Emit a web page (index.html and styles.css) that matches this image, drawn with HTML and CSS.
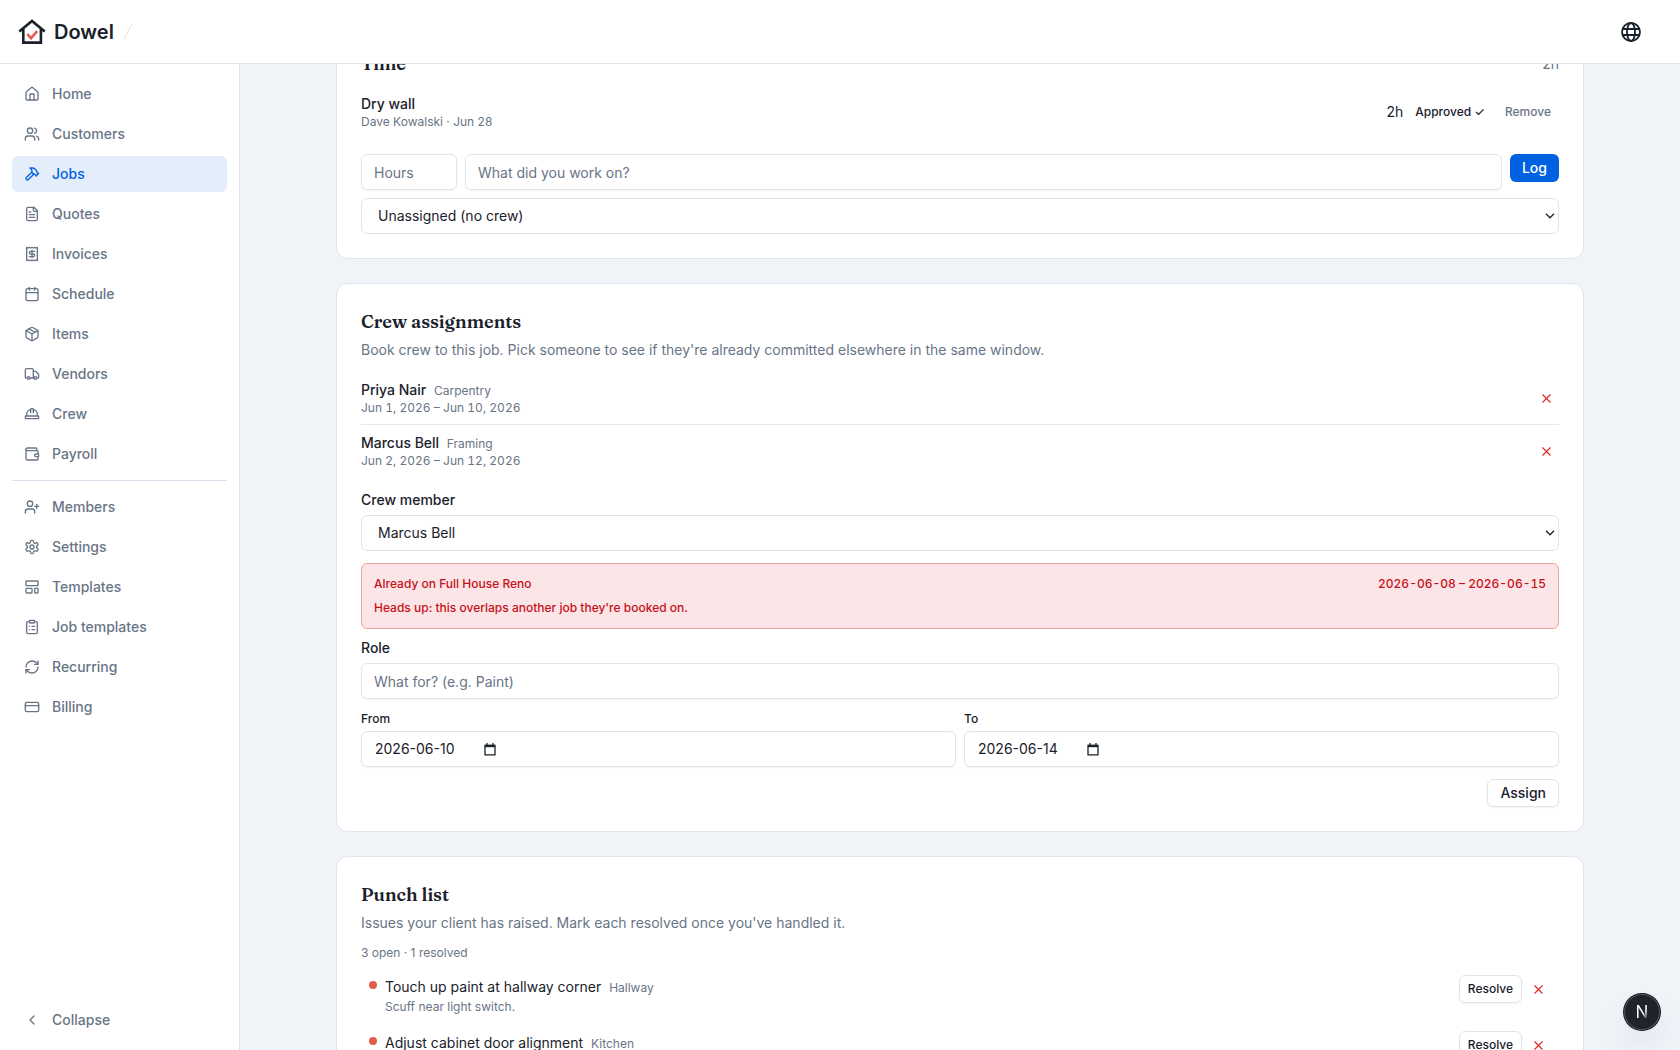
FILE: index.html
```
<!DOCTYPE html>
<html lang="en">
    <head>
        <meta charset="utf-8">
        <meta name="viewport" content="width=device-width, initial-scale=1">
        <title>Dowel</title>
        <link rel="stylesheet" href="styles.css">
    </head>
    <body>
        <header class="topbar">
            <a class="brand" href="#">
                <svg class="brand-mark" viewBox="0 0 28 28" fill="none" stroke="currentColor" stroke-width="2.6">
                    <path d="M1.3 13.6 14 3l12.7 10.6"/>
                    <path d="M5.3 11v13.6h17.6V11"/>
                    <path class="brand-check" d="m9.3 16 3.7 4.2 6.2-7"/>
                </svg>
                <span>Dowel</span>
            </a>
            <svg class="slash" viewBox="0 0 16 16" stroke="currentColor"><path d="M12 0 4 15"/></svg>
            <button class="lang" type="button" aria-label="Language">
                <svg viewBox="0 0 20 20" fill="none" stroke="currentColor" stroke-width="1.8">
                    <circle cx="10" cy="10" r="9"/>
                    <ellipse cx="10" cy="10" rx="4" ry="9"/>
                    <path d="M1.5 7h17M1.5 13h17"/>
                </svg>
            </button>
        </header>

        <div class="layout">
            <aside class="sidebar">
                <nav class="nav">
                    <a class="nav-item" href="#">
                        <svg class="icon" viewBox="0 0 24 24"><path d="M15 21v-8a1 1 0 0 0-1-1h-4a1 1 0 0 0-1 1v8"/><path d="M3 10a2 2 0 0 1 .709-1.528l7-5.999a2 2 0 0 1 2.582 0l7 5.999A2 2 0 0 1 21 10v9a2 2 0 0 1-2 2H5a2 2 0 0 1-2-2z"/></svg>
                        Home
                    </a>
                    <a class="nav-item" href="#">
                        <svg class="icon" viewBox="0 0 24 24"><path d="M16 21v-2a4 4 0 0 0-4-4H6a4 4 0 0 0-4 4v2"/><circle cx="9" cy="7" r="4"/><path d="M22 21v-2a4 4 0 0 0-3-3.87"/><path d="M16 3.13a4 4 0 0 1 0 7.75"/></svg>
                        Customers
                    </a>
                    <a class="nav-item active" href="#">
                        <svg class="icon" viewBox="0 0 24 24"><path d="m15 12-8.373 8.373a1 1 0 1 1-3-3L12 9"/><path d="m18 15 4-4"/><path d="m21.5 11.5-1.914-1.914A2 2 0 0 1 19 8.172V7l-2.26-2.26a6 6 0 0 0-4.202-1.756L9 2.96l.92.82A6.18 6.18 0 0 1 12 8.4V10l2 2h1.172a2 2 0 0 1 1.414.586L18.5 14.5"/></svg>
                        Jobs
                    </a>
                    <a class="nav-item" href="#">
                        <svg class="icon" viewBox="0 0 24 24"><path d="M15 2H6a2 2 0 0 0-2 2v16a2 2 0 0 0 2 2h12a2 2 0 0 0 2-2V7Z"/><path d="M14 2v4a2 2 0 0 0 2 2h4"/><path d="M10 9H8"/><path d="M16 13H8"/><path d="M16 17H8"/></svg>
                        Quotes
                    </a>
                    <a class="nav-item" href="#">
                        <svg class="icon" viewBox="0 0 24 24"><path d="M4 2v20l2-1 2 1 2-1 2 1 2-1 2 1 2-1 2 1V2l-2 1-2-1-2 1-2-1-2 1-2-1-2 1Z"/><path d="M16 8h-6a2 2 0 1 0 0 4h4a2 2 0 1 1 0 4H8"/><path d="M12 17.5v-11"/></svg>
                        Invoices
                    </a>
                    <a class="nav-item" href="#">
                        <svg class="icon" viewBox="0 0 24 24"><path d="M8 2v4"/><path d="M16 2v4"/><rect width="18" height="18" x="3" y="4" rx="2"/><path d="M3 10h18"/></svg>
                        Schedule
                    </a>
                    <a class="nav-item" href="#">
                        <svg class="icon" viewBox="0 0 24 24"><path d="M11 21.73a2 2 0 0 0 2 0l7-4A2 2 0 0 0 21 16V8a2 2 0 0 0-1-1.73l-7-4a2 2 0 0 0-2 0l-7 4A2 2 0 0 0 3 8v8a2 2 0 0 0 1 1.73z"/><path d="M12 22V12"/><path d="M3.29 7 12 12l8.71-5"/><path d="m7.5 4.27 9 5.15"/></svg>
                        Items
                    </a>
                    <a class="nav-item" href="#">
                        <svg class="icon" viewBox="0 0 24 24"><path d="M14 18V6a2 2 0 0 0-2-2H4a2 2 0 0 0-2 2v11a1 1 0 0 0 1 1h2"/><path d="M15 18H9"/><path d="M19 18h2a1 1 0 0 0 1-1v-3.65a1 1 0 0 0-.22-.624l-3.48-4.35A1 1 0 0 0 17.52 8H14"/><circle cx="17" cy="18" r="2"/><circle cx="7" cy="18" r="2"/></svg>
                        Vendors
                    </a>
                    <a class="nav-item" href="#">
                        <svg class="icon" viewBox="0 0 24 24"><path d="M10 10V5a1 1 0 0 1 1-1h2a1 1 0 0 1 1 1v5"/><path d="M14 6a6 6 0 0 1 6 6v3"/><path d="M4 15v-3a6 6 0 0 1 6-6"/><rect x="2" y="15" width="20" height="4" rx="1"/></svg>
                        Crew
                    </a>
                    <a class="nav-item" href="#">
                        <svg class="icon" viewBox="0 0 24 24"><path d="M19 7V4a1 1 0 0 0-1-1H5a2 2 0 0 0 0 4h15a1 1 0 0 1 1 1v4h-3a2 2 0 0 0 0 4h3a1 1 0 0 0 1-1v-2a1 1 0 0 0-1-1"/><path d="M3 5v14a2 2 0 0 0 2 2h15a1 1 0 0 0 1-1v-4"/></svg>
                        Payroll
                    </a>
                </nav>
                <hr class="nav-line">
                <nav class="nav">
                    <a class="nav-item" href="#">
                        <svg class="icon" viewBox="0 0 24 24"><path d="M16 21v-2a4 4 0 0 0-4-4H6a4 4 0 0 0-4 4v2"/><circle cx="9" cy="7" r="4"/><path d="M19 8v6"/><path d="M22 11h-6"/></svg>
                        Members
                    </a>
                    <a class="nav-item" href="#">
                        <svg class="icon" viewBox="0 0 24 24"><path d="M12.22 2h-.44a2 2 0 0 0-2 2v.18a2 2 0 0 1-1 1.73l-.43.25a2 2 0 0 1-2 0l-.15-.08a2 2 0 0 0-2.73.73l-.22.38a2 2 0 0 0 .73 2.73l.15.1a2 2 0 0 1 1 1.72v.51a2 2 0 0 1-1 1.74l-.15.09a2 2 0 0 0-.73 2.73l.22.38a2 2 0 0 0 2.73.73l.15-.08a2 2 0 0 1 2 0l.43.25a2 2 0 0 1 1 1.73V20a2 2 0 0 0 2 2h.44a2 2 0 0 0 2-2v-.18a2 2 0 0 1 1-1.73l.43-.25a2 2 0 0 1 2 0l.15.08a2 2 0 0 0 2.73-.73l.22-.39a2 2 0 0 0-.73-2.73l-.15-.08a2 2 0 0 1-1-1.74v-.5a2 2 0 0 1 1-1.74l.15-.09a2 2 0 0 0 .73-2.73l-.22-.38a2 2 0 0 0-2.73-.73l-.15.08a2 2 0 0 1-2 0l-.43-.25a2 2 0 0 1-1-1.73V4a2 2 0 0 0-2-2z"/><circle cx="12" cy="12" r="3"/></svg>
                        Settings
                    </a>
                    <a class="nav-item" href="#">
                        <svg class="icon" viewBox="0 0 24 24"><rect width="18" height="7" x="3" y="3" rx="1"/><rect width="9" height="7" x="3" y="14" rx="1"/><rect width="5" height="7" x="16" y="14" rx="1"/></svg>
                        Templates
                    </a>
                    <a class="nav-item" href="#">
                        <svg class="icon" viewBox="0 0 24 24"><rect width="8" height="4" x="8" y="2" rx="1"/><path d="M16 4h2a2 2 0 0 1 2 2v14a2 2 0 0 1-2 2H6a2 2 0 0 1-2-2V6a2 2 0 0 1 2-2h2"/><path d="M12 11h4"/><path d="M12 16h4"/><path d="M8 11h.01"/><path d="M8 16h.01"/></svg>
                        Job templates
                    </a>
                    <a class="nav-item" href="#">
                        <svg class="icon" viewBox="0 0 24 24"><path d="M3 12a9 9 0 0 1 9-9 9.75 9.75 0 0 1 6.74 2.74L21 8"/><path d="M21 3v5h-5"/><path d="M21 12a9 9 0 0 1-9 9 9.75 9.75 0 0 1-6.74-2.74L3 16"/><path d="M8 16H3v5"/></svg>
                        Recurring
                    </a>
                    <a class="nav-item" href="#">
                        <svg class="icon" viewBox="0 0 24 24"><rect width="20" height="14" x="2" y="5" rx="2"/><path d="M2 10h20"/></svg>
                        Billing
                    </a>
                </nav>
                <button class="nav-item collapse" type="button">
                    <svg class="icon" viewBox="0 0 24 24"><path d="m15 18-6-6 6-6"/></svg>
                    Collapse
                </button>
            </aside>

            <main class="main">
                <div class="stack">
                    <section class="card">
                        <div class="card-head">
                            <h2>Time</h2>
                            <span class="muted">2h</span>
                        </div>
                        <ul class="rows time-rows">
                            <li class="row">
                                <div class="row-text">
                                    <p class="name">Dry wall</p>
                                    <p class="small">Dave Kowalski · Jun 28</p>
                                </div>
                                <div class="row-side">
                                    <span>2h</span>
                                    <button class="link-btn" type="button">Approved ✓</button>
                                    <button class="btn btn-ghost" type="button">Remove</button>
                                </div>
                            </li>
                        </ul>
                        <form class="time-form">
                            <div class="time-line">
                                <input class="field hours" type="text" placeholder="Hours" aria-label="Hours">
                                <input class="field" type="text" placeholder="What did you work on?" aria-label="What did you work on?">
                                <button class="btn btn-primary" type="button">Log</button>
                            </div>
                            <select class="field" aria-label="Crew">
                                <option>Unassigned (no crew)</option>
                            </select>
                        </form>
                    </section>

                    <section class="card">
                        <h2>Crew assignments</h2>
                        <p class="desc">Book crew to this job. Pick someone to see if they're already committed elsewhere in the same window.</p>
                        <ul class="rows">
                            <li class="row">
                                <div class="row-text">
                                    <p class="name">Priya Nair <span class="tag">Carpentry</span></p>
                                    <p class="small range">Jun 1, 2026 – Jun 10, 2026</p>
                                </div>
                                <button class="btn btn-x" type="button" aria-label="Remove Priya Nair"><svg viewBox="0 0 9 9"><path d="m.5.5 8 8m0-8-8 8"/></svg></button>
                            </li>
                            <li class="row">
                                <div class="row-text">
                                    <p class="name">Marcus Bell <span class="tag">Framing</span></p>
                                    <p class="small range">Jun 2, 2026 – Jun 12, 2026</p>
                                </div>
                                <button class="btn btn-x" type="button" aria-label="Remove Marcus Bell"><svg viewBox="0 0 9 9"><path d="m.5.5 8 8m0-8-8 8"/></svg></button>
                            </li>
                        </ul>
                        <form class="crew-form">
                            <div class="group">
                                <label for="member">Crew member</label>
                                <select class="field" id="member">
                                    <option>Marcus Bell</option>
                                </select>
                            </div>
                            <div class="alert">
                                <p class="alert-line"><span>Already on Full House Reno</span><span class="range">2026-06-08 – 2026-06-15</span></p>
                                <p>Heads up: this overlaps another job they're booked on.</p>
                            </div>
                            <div class="group">
                                <label for="role">Role</label>
                                <input class="field" id="role" type="text" placeholder="What for? (e.g. Paint)">
                            </div>
                            <div class="dates">
                                <div class="date">
                                    <label for="from">From</label>
                                    <div class="field date-field">
                                        <input id="from" type="text" value="2026-06-10">
                                        <button type="button" aria-label="Pick a start date">
                                            <svg class="calendar" viewBox="0 0 12 13"><path d="M1 2.5h10v9.3H1z"/><path d="M1 3h10" stroke-width="2.4"/><path d="M3 0v2M9 0v2"/></svg>
                                        </button>
                                    </div>
                                </div>
                                <div class="date">
                                    <label for="to">To</label>
                                    <div class="field date-field">
                                        <input id="to" type="text" value="2026-06-14">
                                        <button type="button" aria-label="Pick an end date">
                                            <svg class="calendar" viewBox="0 0 12 13"><path d="M1 2.5h10v9.3H1z"/><path d="M1 3h10" stroke-width="2.4"/><path d="M3 0v2M9 0v2"/></svg>
                                        </button>
                                    </div>
                                </div>
                            </div>
                            <button class="btn btn-outline assign" type="button">Assign</button>
                        </form>
                    </section>

                    <section class="card">
                        <h2>Punch list</h2>
                        <p class="desc">Issues your client has raised. Mark each resolved once you've handled it.</p>
                        <p class="small count">3 open · 1 resolved</p>
                        <ul class="punch">
                            <li class="punch-item">
                                <span class="dot"></span>
                                <div class="punch-text">
                                    <p>Touch up paint at hallway corner <span class="tag">Hallway</span></p>
                                    <p class="small note">Scuff near light switch.</p>
                                </div>
                                <div class="punch-side">
                                    <button class="btn btn-outline btn-small" type="button">Resolve</button>
                                    <button class="btn btn-x" type="button" aria-label="Delete"><svg viewBox="0 0 9 9"><path d="m.5.5 8 8m0-8-8 8"/></svg></button>
                                </div>
                            </li>
                            <li class="punch-item">
                                <span class="dot"></span>
                                <div class="punch-text">
                                    <p>Adjust cabinet door alignment <span class="tag">Kitchen</span></p>
                                </div>
                                <div class="punch-side">
                                    <button class="btn btn-outline btn-small" type="button">Resolve</button>
                                    <button class="btn btn-x" type="button" aria-label="Delete"><svg viewBox="0 0 9 9"><path d="m.5.5 8 8m0-8-8 8"/></svg></button>
                                </div>
                            </li>
                        </ul>
                    </section>
                </div>
            </main>
        </div>

        <button class="dev-badge" type="button" aria-label="Dev tools"><span>N</span></button>
    </body>
</html>
```

FILE: styles.css
```
:root {
    --ink: #1a212b;
    --muted: #697586;
    --line: #e0e5ed;
    --blue: #0062e0;
    --red: #c8101a;
}

* {
    box-sizing: border-box;
}

body {
    margin: 0;
    height: 100vh;
    display: flex;
    flex-direction: column;
    overflow: hidden;
    font: 14px/20px Inter, "Liberation Sans", sans-serif;
    color: var(--ink);
    background: #f0f4f9;
}

h2,
p,
ul {
    margin: 0;
    padding: 0;
    list-style: none;
}

button,
input,
select {
    font: inherit;
    color: inherit;
}

button {
    padding: 0;
    border: 0;
    background: none;
    cursor: pointer;
}

/* header */
.topbar {
    flex: none;
    display: flex;
    align-items: center;
    height: 64px;
    padding: 0 38px 0 18px;
    background: #fff;
    border-bottom: 1px solid var(--line);
}

.brand {
    display: flex;
    align-items: center;
    gap: 8px;
    font-size: 20px;
    font-weight: 600;
    line-height: 28px;
    color: var(--ink);
    text-decoration: none;
}

.brand-mark {
    width: 28px;
    height: 28px;
}

.brand-check {
    stroke: #e35d4f;
}

.slash {
    width: 16px;
    height: 16px;
    margin-left: 6px;
    color: #dbe1ea;
}

.lang {
    display: flex;
    margin-left: auto;
}

.lang svg {
    width: 22px;
    height: 20px;
}

/* sidebar */
.layout {
    flex: 1;
    min-height: 0;
    display: flex;
}

.sidebar {
    flex: none;
    width: 240px;
    display: flex;
    flex-direction: column;
    padding: 12px;
    background: #fff;
    border-right: 1px solid var(--line);
}

.nav {
    display: flex;
    flex-direction: column;
    gap: 4px;
}

.nav-item {
    display: flex;
    align-items: center;
    gap: 12px;
    height: 36px;
    padding: 0 12px;
    border-radius: 6px;
    font-weight: 500;
    color: var(--muted);
    text-decoration: none;
}

.nav-item.active {
    color: var(--blue);
    background: #e4eefb;
}

.icon {
    width: 16px;
    height: 16px;
    fill: none;
    stroke: currentColor;
    stroke-width: 2;
    stroke-linecap: round;
    stroke-linejoin: round;
}

.nav-line {
    width: 100%;
    margin: 8px 0;
    border: 0;
    border-top: 1px solid #d8e1ec;
}

.collapse {
    margin-top: auto;
}

/* content, scrolled down to the time card */
.main {
    flex: 1;
    min-width: 0;
    overflow: hidden;
    padding: 0 24px;
}

.stack {
    max-width: 1248px;
    margin: -39px auto 0;
    display: flex;
    flex-direction: column;
    gap: 24px;
}

.card {
    padding: 24px;
    background: #fff;
    border: 1px solid var(--line);
    border-radius: 12px;
}

.card h2 {
    font: 600 18px/28px Fraunces, "Liberation Serif", serif;
    font-variation-settings: "opsz" 72;
}

.card-head {
    display: flex;
    align-items: center;
    justify-content: space-between;
}

.muted,
.desc {
    color: var(--muted);
}

.desc {
    margin-top: 4px;
}

.small {
    font-size: 12px;
    line-height: 16px;
    color: var(--muted);
}

.range {
    font-variant-numeric: tabular-nums;
}

.rows {
    margin-top: 12px;
}

.time-rows {
    margin-top: 8px;
}

.row {
    display: flex;
    align-items: center;
    justify-content: space-between;
    padding: 8px 0;
}

.row + .row {
    border-top: 1px solid #e6eaf0;
}

.row-side {
    display: flex;
    align-items: center;
    gap: 12px;
}

.name {
    font-weight: 500;
}

.tag {
    margin-left: 4px;
    font-size: 12px;
    font-weight: 400;
    line-height: 16px;
    color: var(--muted);
}

/* buttons */
.btn {
    flex: none;
    height: 28px;
    padding: 0 12px;
    border-radius: 6px;
    font-weight: 500;
}

.btn-primary {
    color: #fff;
    background: var(--blue);
}

.btn-outline {
    border: 1px solid var(--line);
    background: #fff;
    box-shadow: 0 1px 2px rgba(26, 33, 43, .05);
}

.btn-small,
.btn-ghost,
.btn-x {
    padding: 0 8px;
    font-size: 12px;
}

.btn-ghost {
    color: var(--muted);
}

.btn-x svg {
    display: block;
    width: 9px;
    height: 9px;
    stroke: #dc2626;
    stroke-width: 1.1;
}

.link-btn {
    font-size: 12px;
    font-weight: 500;
}

/* form fields */
.field {
    display: block;
    width: 100%;
    height: 36px;
    padding: 0 12px;
    border: 1px solid var(--line);
    border-radius: 6px;
    background: #fff;
    box-shadow: 0 1px 2px rgba(26, 33, 43, .05);
}

select.field {
    padding-left: 16px;
    appearance: none;
    background: #fff url("data:image/svg+xml,%3Csvg xmlns='http://www.w3.org/2000/svg' width='10' height='6' fill='none' stroke='%231a212b' stroke-width='1.3'%3E%3Cpath d='m1 .8 4 4 4-4'/%3E%3C/svg%3E") no-repeat right 3px center;
    box-shadow: none;
}

.field::placeholder {
    color: var(--muted);
    opacity: 1;
}

.time-form {
    display: flex;
    flex-direction: column;
    gap: 8px;
    margin-top: 16px;
}

.time-line {
    display: flex;
    gap: 8px;
}

.field.hours {
    flex: none;
    width: 96px;
}

.crew-form {
    display: flex;
    flex-direction: column;
    gap: 12px;
    margin-top: 16px;
}

.group {
    display: flex;
    flex-direction: column;
    gap: 8px;
    font-weight: 500;
    line-height: 14px;
}

.group .field {
    font-weight: 400;
}

.alert {
    display: flex;
    flex-direction: column;
    gap: 8px;
    padding: 12px;
    border: 1px solid #f0a0a4;
    border-radius: 6px;
    font-size: 12px;
    font-weight: 500;
    line-height: 16px;
    color: var(--red);
    background: #fbe5e7;
}

.alert-line {
    display: flex;
    justify-content: space-between;
}

.dates {
    display: grid;
    grid-template-columns: 1fr 1fr;
    gap: 8px;
}

.date {
    display: flex;
    flex-direction: column;
    gap: 4px;
}

.date label {
    font-size: 12px;
    font-weight: 500;
    line-height: 16px;
}

.date-field {
    display: flex;
    align-items: center;
}

.date-field input {
    width: 110px;
    padding: 0 1px;
    border: 0;
    background: none;
}

.calendar {
    display: block;
    width: 12px;
    height: 13px;
    fill: none;
    stroke: currentColor;
    stroke-width: 1.3;
}

.assign {
    align-self: flex-end;
}

/* punch list */
.count {
    margin-top: 12px;
}

.punch {
    display: flex;
    flex-direction: column;
    gap: 4px;
    margin-top: 8px;
}

.punch-item {
    display: flex;
    align-items: flex-start;
    gap: 8px;
    padding: 6px 8px;
}

.dot {
    flex: none;
    width: 8px;
    height: 8px;
    margin-top: 6px;
    border-radius: 50%;
    background: #e35d4f;
}

.punch-text {
    flex: 1;
    padding-top: 2px;
}

.note {
    margin-top: 2px;
}

.punch-side {
    display: flex;
    gap: 4px;
}

.dev-badge {
    position: fixed;
    right: 20px;
    bottom: 20px;
    width: 36px;
    height: 36px;
    border-radius: 50%;
    background: #20232b;
    box-shadow: inset 0 0 0 1px #50545b, 0 0 0 1px #15181d, 0 16px 32px -8px rgba(40, 50, 90, .24);
    font-size: 17px;
    font-weight: 400;
}

.dev-badge span {
    color: transparent;
    background: linear-gradient(135deg, #fff 60%, #50545b 80%);
    background-clip: text;
    -webkit-background-clip: text;
}
```
